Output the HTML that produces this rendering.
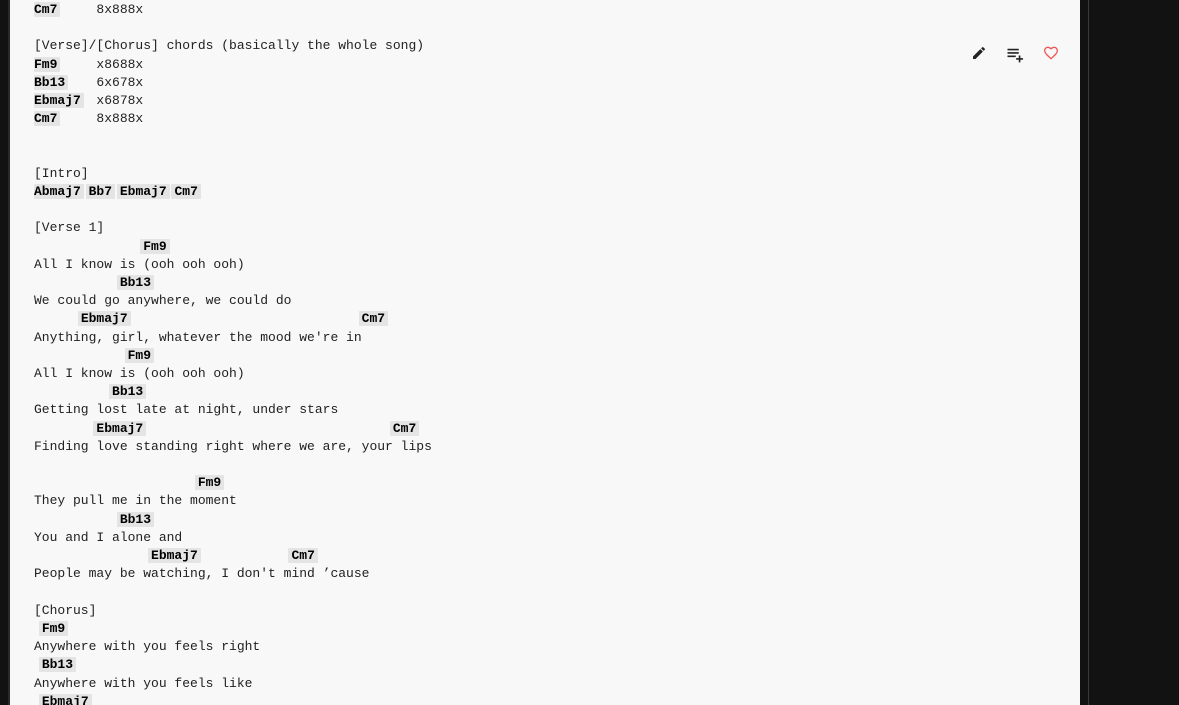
<!DOCTYPE html>
<html><head><meta charset="utf-8"><style>
html,body{margin:0;padding:0;width:1179px;height:705px;overflow:hidden;background:#121212}
.wrap{position:relative;width:1179px;height:705px;overflow:hidden}
.panel{position:absolute;left:10px;top:0;width:1070px;height:705px;background:#f8f8f8}
.vl{position:absolute;left:1088px;top:0;width:1px;height:705px;background:#3a3a3a}
.ll{position:absolute;left:8px;top:0;width:2px;height:705px;background:#2a2a2a}
pre{position:absolute;left:34px;top:1px;height:704px;overflow:hidden;margin:0;font-family:"Liberation Mono",monospace;font-size:13px;line-height:18.2px;color:#212121;white-space:pre}
b{font-weight:bold;color:#000;background:#e4e4e4;box-shadow:-3px 0 0 #e4e4e4,3px 0 0 #e4e4e4;border-radius:1px}
.ic{position:absolute;top:45px}
</style></head><body><div class="wrap">
<div class="ll"></div>
<div class="panel"></div>
<div class="vl"></div>
<pre><b>Cm7</b>     8x888x

[Verse]/[Chorus] chords (basically the whole song)
<b>Fm9</b>     x8688x
<b>Bb13</b>    6x678x
<b>Ebmaj7</b>  x6878x
<b>Cm7</b>     8x888x


[Intro]
<b>Abmaj7</b> <b>Bb7</b> <b>Ebmaj7</b> <b>Cm7</b>

[Verse 1]
              <b>Fm9</b>
All I know is (ooh ooh ooh)
           <b>Bb13</b>
We could go anywhere, we could do
      <b>Ebmaj7</b>                              <b>Cm7</b>
Anything, girl, whatever the mood we're in
            <b>Fm9</b>
All I know is (ooh ooh ooh)
          <b>Bb13</b>
Getting lost late at night, under stars
        <b>Ebmaj7</b>                                <b>Cm7</b>
Finding love standing right where we are, your lips

                     <b>Fm9</b>
They pull me in the moment
           <b>Bb13</b>
You and I alone and
               <b>Ebmaj7</b>            <b>Cm7</b>
People may be watching, I don't mind ’cause

[Chorus]
 <b>Fm9</b>
Anywhere with you feels right
 <b>Bb13</b>
Anywhere with you feels like
 <b>Ebmaj7</b></pre>
<svg class="ic" style="left:971px" width="16" height="16" viewBox="0 0 24 24"><path d="M3 17.25V21h3.75L17.8 9.94l-3.75-3.75L3 17.25zM20.7 7.04a1 1 0 0 0 0-1.410l-2.34-2.34a1 1 0 0 0-1.41 0l-1.83 1.83 3.75 3.75 1.83-1.83z" fill="#222"/></svg>
<svg class="ic" style="left:1006px" width="18" height="18" viewBox="0 0 24 24"><path d="M2 5h15v2.2H2zM2 9.5h15v2.2H2zM2 14h11v2.2H2zM17 14h2.2v3.5h3.5v2.2h-3.5v3.5H17v-3.5h-3.5v-2.2H17z" fill="#222"/></svg>
<svg class="ic" style="left:1043px" width="16" height="16" viewBox="0 0 24 24"><path d="M12 20.5l-1.3-1.2C5.6 14.7 2.5 11.9 2.5 8.4 2.5 5.6 4.7 3.5 7.4 3.5c1.6 0 3.1.7 4.6 2.2 1.5-1.5 3-2.2 4.6-2.2 2.7 0 4.9 2.1 4.9 4.9 0 3.5-3.1 6.3-8.2 10.9L12 20.5z" fill="none" stroke="#f0575a" stroke-width="2"/></svg>
</div></body></html>
